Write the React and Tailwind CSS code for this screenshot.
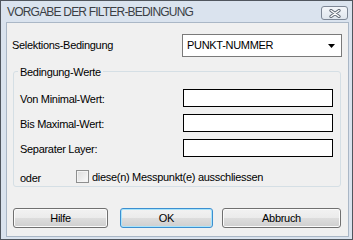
import React from 'react';

const Btn = ({ label, primary, w }) => (
    <div
        className={`${w} h-[20px] flex items-center justify-center rounded-[3px] border text-[11px] text-black bg-[linear-gradient(#f2f2f2,#ebebeb_50%,#dddddd_50%,#cfcfcf)] ${primary ? 'border-[#3c8fd0] shadow-[inset_0_0_0_1px_#a8e4fb]' : 'border-[#707070] shadow-[inset_0_0_0_1px_#fbfbfb]'}`}
    >
        {label}
    </div>
);

const Feld = ({ label }) => (
    <div className="flex items-center justify-between h-[18px]">
        <span className="mt-[2px]">{label}</span>
        <div className="w-[150px] h-[18px] bg-white border border-black"></div>
    </div>
);

export default function App() {
    return (
        <div className="w-[353px] h-[240px] flex flex-col border border-[#50565e] bg-[#dae3ee] font-['Liberation_Sans',Arial,sans-serif] tracking-[-0.3px] text-[11px] text-black">
            {/* Titelleiste */}
            <div className="h-[21px] flex justify-between pl-[6px] pr-[4px]">
                <span className="self-center text-[12px] text-[#3b3f45] tracking-[-0.8px] mt-[1px]">VORGABE DER FILTER-BEDINGUNG</span>
                <div className="mt-[5px] w-[27px] h-[14px] rounded-[3px] border border-[#7d8796] bg-[linear-gradient(#f3f6fa,#dfe6ee)] flex items-center justify-center">
                    <svg width="12" height="9" viewBox="0 0 12 9">
                        <path d="M2 1.5 L10 7.5 M10 1.5 L2 7.5" stroke="#5b6470" strokeWidth="3.2" strokeLinecap="round" />
                        <path d="M2 1.5 L10 7.5 M10 1.5 L2 7.5" stroke="#ffffff" strokeWidth="1.4" strokeLinecap="round" />
                    </svg>
                </div>
            </div>

            {/* Inhalt */}
            <div className="flex-1 ml-[5px] mr-[3px] mb-[2px] border border-[#aab7c6] bg-[#f0f0f0] flex flex-col">
                <div className="flex items-center justify-between pl-[5px] pr-[6px] mt-[11px]">
                    <span>Selektions-Bedingung</span>
                    <div className="w-[160px] h-[23px] bg-white border border-[#7a7a7a] flex items-center justify-between pl-[4px] pr-[6px]">
                        <span>PUNKT-NUMMER</span>
                        <svg width="7" height="4" viewBox="0 0 7 4">
                            <path d="M0 0 H7 L3.5 4 Z" fill="#000" />
                        </svg>
                    </div>
                </div>

                <div className="relative mt-[14px] ml-[6px] w-[328px] h-[116px] rounded-[3px] border border-[#d5dfe5] flex flex-col pl-[6px] pr-[7px] pt-[17px]">
                    <span className="absolute -top-[8px] left-[4px] px-[2px] bg-[#f0f0f0]">Bedingung-Werte</span>
                    <div className="flex flex-col gap-[7px]">
                        <Feld label="Von Minimal-Wert:" />
                        <Feld label="Bis Maximal-Wert:" />
                        <Feld label="Separater Layer:" />
                    </div>
                    <div className="flex items-center mt-[10px]">
                        <span className="w-[56px] mt-[3px]">oder</span>
                        <div className="w-[13px] h-[13px] border border-[#8e8f8f] bg-[linear-gradient(135deg,#dcdcdc,#fbfbfb)] shadow-[inset_0_0_0_1px_#f4f4f4]"></div>
                        <span className="ml-[3px]">diese(n) Messpunkt(e) ausschliessen</span>
                    </div>
                </div>

                <div className="flex mt-[21px] ml-[6px]">
                    <Btn label="Hilfe" w="w-[95px]" />
                    <div className="ml-[12px]"><Btn label="OK" primary w="w-[93px]" /></div>
                    <div className="ml-[9px]"><Btn label="Abbruch" w="w-[119px]" /></div>
                </div>
            </div>
        </div>
    );
}
